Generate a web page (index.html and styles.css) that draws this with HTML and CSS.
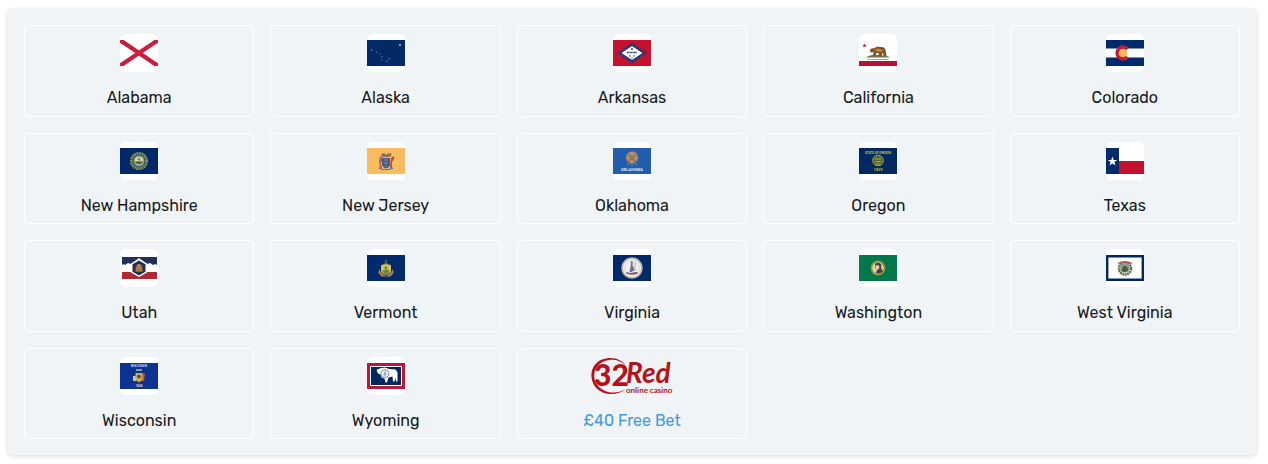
FILE: index.html
```html
<!DOCTYPE html>
<html lang="en">
<head>
<meta charset="utf-8">
<meta name="viewport" content="width=device-width, initial-scale=1">
<title>States</title>
<link rel="stylesheet" href="styles.css">
</head>
<body>
<main class="panel">
  <a class="card" href="#alabama">
    <svg class="flag" viewBox="0 0 38 38" aria-hidden="true">
      <path d="M2 7.500L36 30.500M36 7.500L2 30.500" stroke="#c91f3c" stroke-width="4.400"/>
      <path d="M0 6h3.500v4L0 9zM38 6h-3.500v4L38 9zM0 32h3.500v-4L0 29zM38 32h-3.500v-4l3.500 1z" fill="#c91f3c"/>
      <path d="M15.500 19l3.500-2.500 3.500 2.500-3.500 2.500z" fill="#e8173a"/>
    </svg>
    <span class="name">Alabama</span>
  </a>
  <a class="card" href="#alaska">
    <svg class="flag" viewBox="0 0 38 38" aria-hidden="true">
      <path d="M0 6h38v26H0z" fill="#012a66"/>
      <g fill="#93a39f"><circle cx="33" cy="11" r="1" fill="#c5cbb0"/><circle cx="4.500" cy="16" r=".7"/><circle cx="9.500" cy="18" r=".6"/><circle cx="12.500" cy="20" r=".6"/><circle cx="15" cy="22.500" r=".6"/><circle cx="14.500" cy="26" r=".6"/><circle cx="20" cy="27" r=".7"/><circle cx="22.500" cy="24.500" r=".6"/></g>
    </svg>
    <span class="name">Alaska</span>
  </a>
  <a class="card" href="#arkansas">
    <svg class="flag" viewBox="0 0 38 38" aria-hidden="true">
      <path d="M0 6h38v26H0z" fill="#c4122f"/>
      <path d="M19 8.500L33.500 19 19 29.500 4.500 19z" fill="#1d2a66"/>
      <path d="M19 9.600L32 19 19 28.400 6 19z" fill="none" stroke="#c9cde0" stroke-width=".6" stroke-dasharray=".6 1.200"/>
      <path d="M19 12L29.500 19 19 26 8.500 19z" fill="#fff"/>
      <path d="M14 18.500h10" stroke="#1d2a66" stroke-width="1.300" stroke-dasharray="1 .4"/>
      <g fill="#1d2a66"><circle cx="19" cy="15" r=".9"/><circle cx="17" cy="22" r=".8"/><circle cx="21" cy="22" r=".8"/><circle cx="19" cy="24" r=".7"/></g>
    </svg>
    <span class="name">Arkansas</span>
  </a>
  <a class="card" href="#california">
    <svg class="flag" viewBox="0 0 38 38" aria-hidden="true">
      <path d="M0 27h38v5H0z" fill="#b71234"/>
      <path d="M5.500 9.500l.6 1.500h1.500l-1.200 1 .5 1.500-1.400-.9-1.400.9.500-1.500-1.200-1h1.500z" fill="#b71234"/>
      <path d="M7 23.500c2-2 5-2.800 9-2.500s10-.5 15 2.500z" fill="#66793d"/>
      <path d="M11 16c1-1.500 2.500-2 4-1.500 2-2 4-2.200 6-1.500 3-.5 5 .5 5.500 3l1 6h-2.500l-1.500-3.500-1 3.500h-2.500l-.5-3h-2l-1.500 3H14l.5-4-3 .500z" fill="#825024"/>
      <path d="M15 16l5-1.500 4 2-2 1.500-4-.5z" fill="#c18a38"/>
      <text x="19" y="26" class="motto" fill="#3f2b20">CALIFORNIA REPUBLIC</text>
    </svg>
    <span class="name">California</span>
  </a>
  <a class="card" href="#colorado">
    <svg class="flag" viewBox="0 0 38 38" aria-hidden="true">
      <path d="M0 6h38v8.500H0zM0 23.500h38V32H0z" fill="#012a6b"/>
      <circle cx="17" cy="19" r="4.200" fill="#fdb94b"/>
      <path d="M21.500 15a6 6 0 1 0 0 8" fill="none" stroke="#be1e37" stroke-width="3.400"/>
    </svg>
    <span class="name">Colorado</span>
  </a>
  <a class="card" href="#new-hampshire">
    <svg class="flag" viewBox="0 0 38 38" aria-hidden="true">
      <path d="M0 6h38v26H0z" fill="#01296a"/>
      <circle cx="19" cy="19" r="7.500" fill="none" stroke="#788f57" stroke-width="3.200" stroke-dasharray="2 .5"/>
      <circle cx="19" cy="19" r="5.500" fill="#8fa36b"/>
      <circle cx="19" cy="18.500" r="4" fill="#d9d9b4"/>
      <path d="M15 19.500h8c-.5 3-7 3.500-8 0z" fill="#4c4a37"/>
      <path d="M19 15v4M17 17l4 1" stroke="#725a36" stroke-width=".7"/>
    </svg>
    <span class="name">New Hampshire</span>
  </a>
  <a class="card" href="#new-jersey">
    <svg class="flag" viewBox="0 0 38 38" aria-hidden="true">
      <path d="M0 6h38v26H0z" fill="#fbbb61"/>
      <path d="M14 12l3-1 2 1.500L22 11l3 1-2 3h-8z" fill="#947052"/>
      <path d="M13 14l3 2-2 5 1 5h-2l-1-7z" fill="#c65b35"/>
      <path d="M24 16l3-2v3l-2 3v6h-2z" fill="#c34837"/>
      <path d="M15 16h8v6c0 2.500-2 4-4 4.500-2-.5-4-2-4-4.500z" fill="#425c93"/>
      <path d="M17 18h4M17 21h4M18 24h2" stroke="#b5a77d" stroke-width=".7"/>
      <path d="M12 26c4 2 10 2 14 0" fill="none" stroke="#526fa4" stroke-width="1.200"/>
    </svg>
    <span class="name">New Jersey</span>
  </a>
  <a class="card" href="#oklahoma">
    <svg class="flag" viewBox="0 0 38 38" aria-hidden="true">
      <path d="M0 6h38v26H0z" fill="#215fae"/>
      <circle cx="19" cy="15.500" r="6" fill="#b98d68"/>
      <path d="M15 12l8 8M23 12l-8 8" stroke="#6c7950" stroke-width="1.500"/>
      <path d="M14 17l3 2M21 13l2 2" stroke="#d8714e" stroke-width="1.500"/>
      <path d="M15 21v2M19 21v3M23 21v2" stroke="#9e8b7e"/>
      <text x="19" y="29" class="band" fill="#dfe8f3">OKLAHOMA</text>
    </svg>
    <span class="name">Oklahoma</span>
  </a>
  <a class="card" href="#oregon">
    <svg class="flag" viewBox="0 0 38 38" aria-hidden="true">
      <path d="M0 6h38v26H0z" fill="#01295f"/>
      <text x="19" y="12" class="arc" fill="#c9be46">STATE OF OREGON</text>
      <circle cx="19" cy="18.500" r="5.300" fill="#53632f" stroke="#a8a83e"/>
      <path d="M16 17h6M16 19.500h6M17 22h4" stroke="#c9be46" stroke-width=".8"/>
      <text x="19" y="29" class="band" fill="#b7ae42">1859</text>
    </svg>
    <span class="name">Oregon</span>
  </a>
  <a class="card" href="#texas">
    <svg class="flag" viewBox="0 0 38 38" aria-hidden="true">
      <path d="M13 19h25v13H13z" fill="#c3122f"/>
      <path d="M0 6h13v26H0z" fill="#012a6b"/>
      <path d="M6.500 14.500l1.200 3.400h3.600l-2.900 2.200 1.100 3.500-3-2.100-3 2.100 1.100-3.500-2.900-2.200h3.600z" fill="#fff"/>
    </svg>
    <span class="name">Texas</span>
  </a>
  <a class="card" href="#utah">
    <svg class="flag" viewBox="0 0 38 38" aria-hidden="true">
      <path d="M2 8h35v8l-2-1-2 1-3-2-3 1-8-6-8 6-3-1-3 2-1.500-1L2 16z" fill="#1f2f5e"/>
      <path d="M2 23h35v7H2z" fill="#b02a30"/>
      <path d="M19 10l8 4.500v9L19 28l-8-4.500v-9z" fill="#fff"/>
      <path d="M19 11.500l6.500 3.800v7.400L19 26.500l-6.500-3.800v-7.400z" fill="#26304f"/>
      <path d="M15.500 22.500c0-4 1-7.500 3.500-7.500s3.500 3.500 3.500 7.500z" fill="#c28a4a"/>
      <path d="M16 18h6M15.500 20.500h7" stroke="#73563d" stroke-width=".6"/>
    </svg>
    <span class="name">Utah</span>
  </a>
  <a class="card" href="#vermont">
    <svg class="flag" viewBox="0 0 38 38" aria-hidden="true">
      <path d="M0 6h38v26H0z" fill="#012a6b"/>
      <path d="M12 20c2 3 2 5 7 7 5-2 5-4 7-7l.5 4-3 3.500h-9l-3-3.500z" fill="#b5824d"/>
      <path d="M14 16.500c3-2 7-2 10 0V21c0 3-2 4-5 5-3-1-5-2-5-5z" fill="#d8c64e"/>
      <path d="M15.500 21h7l-1 3-2.500 1.500-2.500-1.500z" fill="#648346"/>
      <path d="M19 17v5M17 19h4" stroke="#5f8048" stroke-width="1.200"/>
      <path d="M19 11v4M17 15h4" stroke="#8c7d45" stroke-width="1.200"/>
    </svg>
    <span class="name">Vermont</span>
  </a>
  <a class="card" href="#virginia">
    <svg class="flag" viewBox="0 0 38 38" aria-hidden="true">
      <path d="M0 6h38v26H0z" fill="#012a6b"/>
      <circle cx="19" cy="19" r="10" fill="#f0efec" stroke="#b6b1a6" stroke-width="1.500"/>
      <circle cx="19" cy="19" r="7.500" fill="none" stroke="#c5bcae" stroke-width=".7" stroke-dasharray="1 .6"/>
      <path d="M18 12l2 1-.5 3 2 5-3 2h-2l1-5z" fill="#667298"/>
      <path d="M13 23l4 1 7-1 1 1c-3 2-8 2-12 0z" fill="#7c4c5c"/>
      <path d="M22 13v9" stroke="#9d9691" stroke-width=".7"/>
    </svg>
    <span class="name">Virginia</span>
  </a>
  <a class="card" href="#washington">
    <svg class="flag" viewBox="0 0 38 38" aria-hidden="true">
      <path d="M0 6h38v26H0z" fill="#04784a"/>
      <circle cx="19" cy="19" r="6.500" fill="#d9d6b6" stroke="#a49435" stroke-width="1.800"/>
      <path d="M16 15c2-2 6-1.500 6.500 1.500L22 19l2 3.500c-2 2-5 2.500-7 1.500l1-3-2-2z" fill="#3b4547"/>
      <path d="M16.500 16.500l3-.5 1 3-2 2-2-1z" fill="#e6cda4"/>
    </svg>
    <span class="name">Washington</span>
  </a>
  <a class="card" href="#west-virginia">
    <svg class="flag" viewBox="0 0 38 38" aria-hidden="true">
      <path d="M1.200 7.200h35.600v23.600H1.200z" fill="#fff" stroke="#01285f" stroke-width="2.400"/>
      <circle cx="19" cy="19.500" r="6" fill="none" stroke="#60734d" stroke-width="2.600" stroke-dasharray="2 .5"/>
      <circle cx="19" cy="19" r="4.700" fill="#8f9d88"/>
      <path d="M15.500 21l2-4h3l2 4-3 2h-2z" fill="#435d4a"/>
      <path d="M12 14.500c3-2 11-2 14 0" fill="none" stroke="#b6484b" stroke-width="1.500"/>
    </svg>
    <span class="name">West Virginia</span>
  </a>
  <a class="card" href="#wisconsin">
    <svg class="flag" viewBox="0 0 38 38" aria-hidden="true">
      <path d="M0 6h38v26H0z" fill="#0c3292"/>
      <text x="19" y="10" class="arc" fill="#cbd4e8">WISCONSIN</text>
      <path d="M16 13h6" stroke="#9a9b75" stroke-width="2"/>
      <path d="M13 19h3v5h-3z" fill="#c9c4bd"/>
      <path d="M22 16l3 1-1 7h-2z" fill="#c6523f"/>
      <path d="M15.500 16h7v7L19 25.500 15.500 23z" fill="#c9ab4b"/>
      <circle cx="19" cy="19.500" r="1.800" fill="#4f493b"/>
      <text x="19" y="30" class="arc" fill="#cbd4e8">1848</text>
    </svg>
    <span class="name">Wisconsin</span>
  </a>
  <a class="card" href="#wyoming">
    <svg class="flag" viewBox="0 0 38 38" aria-hidden="true">
      <path d="M0 6h38v26H0z" fill="#bd1638"/>
      <path d="M3.500 9.500h31v19h-31z" fill="#01285f" stroke="#fff"/>
      <path d="M9.500 13l3-1.500 5-1 5 1.500 6 .5 2 3v9h-1.500l-.5-4-1 4h-1.500l-.5-5-4 1-1.500 5h-1.500l-1-4-3-1-1-3-2.500-1z" fill="#fff"/>
      <circle cx="18" cy="16.500" r="4" fill="#eef0f5" stroke="#6c7898" stroke-width=".8"/>
      <path d="M18 14v5M16.500 17h3" stroke="#6c7898" stroke-width=".8"/>
    </svg>
    <span class="name">Wyoming</span>
  </a>
  <a class="card" href="#free-bet">
    <svg class="brand" viewBox="0 0 82 38" role="img" aria-label="32Red online casino">
      <path d="M35 32C24 41 8 37 3 28-3 17 2 6 11 2.500c9-3.500 19-1 24 6C29 2.500 20 1.500 13 4.500 4 8 1 18 5 26c5 9 18 13 30 6z" fill="#b3131b"/>
      <text x="3" y="29" class="brand-number">32</text>
      <text x="35" y="26" class="brand-word">Red</text>
      <text x="35" y="36" class="brand-line">online casino</text>
    </svg>
    <span class="name offer">£40 Free Bet</span>
  </a>
</main>
</body>
</html>
```
FILE: styles.css
```css
* {
  box-sizing: border-box;
}

body {
  display: grid;
  min-height: 100vh;
  margin: 0;
  padding: 9px 12px 9px 8px;
  background: #fff;
  font-family: Rubik, Roboto, "Liberation Sans", sans-serif;
}

.panel {
  display: grid;
  grid-template-columns: repeat(5, 1fr);
  grid-auto-rows: 1fr;
  gap: 16px;
  padding: 16px;
  border-radius: 4px;
  background: #f0f4f7;
  box-shadow: 0 1px 4px rgba(0, 0, 0, 0.16);
}

.card {
  display: flex;
  flex-direction: column;
  align-items: center;
  gap: 14px;
  padding: 8px 8px 5px;
  border: 1px solid #fff;
  border-radius: 4px;
  color: #16191d;
  text-decoration: none;
}

.flag {
  width: 38px;
  height: 38px;
  border-radius: 6px;
  background: #fff;
}

.brand {
  width: 82px;
  height: 38px;
}

.name {
  font-size: 16px;
  line-height: 24px;
}

.offer {
  color: #4299e1;
}

.motto,
.arc,
.band {
  font-family: Roboto, sans-serif;
  font-weight: 700;
  text-anchor: middle;
}

.motto {
  font-size: 2px;
}

.arc {
  font-size: 3px;
}

.band {
  font-size: 4px;
}

.brand-number {
  fill: #b3131b;
  font: 900 30px Lato, sans-serif;
}

.brand-word {
  fill: #b3131b;
  font: italic 700 28px Lato, sans-serif;
}

.brand-line {
  fill: #b3131b;
  font: 700 8px Lato, sans-serif;
}
```
